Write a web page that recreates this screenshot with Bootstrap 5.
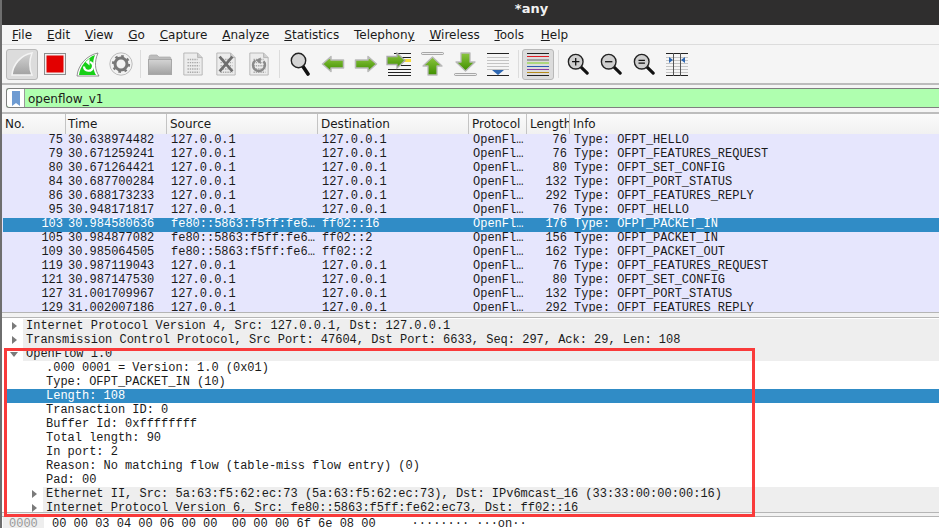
<!DOCTYPE html>
<html lang="en">
<head>
<meta charset="utf-8">
<title>*any</title>
<link rel="stylesheet" href="https://cdn.jsdelivr.net/npm/bootstrap@5.3.0/dist/css/bootstrap.min.css">
<style>
html,body{height:528px;overflow:hidden;background:#f5f5f5}
.wsapp{position:relative;height:528px;overflow:hidden;font-family:"DejaVu Sans",sans-serif;font-size:12px;color:#1a1a1a;border-left:2px solid #6e6e6e}
.titlebar{height:25px;background:#2f2e2e;color:#f2f2f2;font-weight:700;font-size:13px;line-height:13px;padding:2px 0 0 124px;text-align:center;margin-left:-2px;box-sizing:border-box}
.menubar{height:19px;background:#f5f5f5;padding-left:10px;gap:14.8px;line-height:21px;border-bottom:1px solid #dcdcdc;box-sizing:content-box}
.helpitem{margin-left:2px}
.toolbar{height:38px;background:#f5f5f5;border-bottom:2px solid #bcbcbc;padding-left:3.5px;box-sizing:content-box}
.slot{width:33px;height:38px}
.slot svg{display:block}
.pressed{background:#dcdcdc;border:1px solid #b8b8b8;border-radius:3px;width:32px;height:31px}
.sepline{width:1px;height:28px;background:#dcdcdc}
.sepa{width:6px}.sepb{width:8px}.sepc{width:7px}
.filterwrap{height:28px;padding:3px 0 0 4px;background:#f5f5f5}
.filterbox{height:20px;background:#afffaf;border:1px solid #7f7f7f;border-right:0;border-radius:3px 0 0 3px;line-height:20px}
.bookmark{width:18px;background:#fff;border-right:1px solid #9a9a9a;border-radius:3px 0 0 3px}
.filtertext{padding-left:3px}
.coltitle{height:20px;background:linear-gradient(#fbfbfb,#f1f1f1);border-top:2px solid #bdbdbd;line-height:21px;margin-top:-1px;padding-left:1px;box-sizing:content-box}
.coltitle>div{border-right:1px solid #c4c4c4;padding-left:3px;white-space:nowrap;overflow:hidden}
.coltitle>.cno{padding-left:2px}.coltitle>.ctime{padding-left:2px}
.cno{width:63px}.ctime{width:101px}.csrc{width:151px}.cdst{width:151px}.cprot{width:58px}.clen{width:43px}.cinfo{flex:1}
.mono{font-family:"Liberation Mono",monospace;font-size:12px;letter-spacing:-.01px}
.plist{height:179px;overflow:hidden;background:#e4e4fb;padding-left:1px;border-bottom:1px solid #b5b5b5}
.prow{height:14px;line-height:12px;background:#e6e6fd;white-space:nowrap}
.prow>div{padding-left:4px;overflow:hidden}
.prow>.ctime{padding-left:2px}
.prow .cno,.prow .clen{text-align:right;padding-right:3px;padding-left:2px}
.prow.chosen{background:#308cc6;color:#fff}
.splitter{height:5px;background:#f2f2f2;border-bottom:1px solid #b5b5b5}
.dpane{height:195px;overflow:hidden;background:#fff;border-bottom:1px solid #b5b5b5;padding-top:1px}
.drow{height:14px;line-height:14px;white-space:pre;padding-left:3px}
.lvl1{background:#eee;margin-left:21px}
.lvl2{background:#eee;margin-left:41px;padding-left:3px}
.lvlf{padding-left:44px}
.dline{position:relative}
.arrow{position:absolute;top:3px;width:0;height:0;border-top:4px solid transparent;border-bottom:4px solid transparent;border-left:5px solid #7a7a7a}
.arrow.open{top:5px;border-left:4px solid transparent;border-right:4px solid transparent;border-top:5px solid #7a7a7a;border-bottom:0;left:8px}
.a1{left:10px}.a2{left:30px}
.chosen2{background:#308cc6;color:#fff;margin-left:4px;padding-left:40px}
.gapfill{height:4px;background:#f2f2f2;border-bottom:1px solid #b5b5b5}
.hexrow{height:14px;line-height:14px;background:#fff;white-space:pre}
.hexoff{width:41px;background:#eee;color:#999;padding-left:6px;margin-left:1px}
.hexdata{padding-left:8px}
.redbox{position:absolute;left:1.5px;top:348px;width:751px;height:169px;border:3px solid #f93a3a;pointer-events:none}
</style>
</head>
<body>
<svg width="0" height="0" class="d-block" aria-hidden="true">
<defs>
<linearGradient id="gg" x1="0" y1="0" x2="0" y2="1"><stop offset="0" stop-color="#8cc63f"/><stop offset="1" stop-color="#3f8f00"/></linearGradient>
<linearGradient id="fg" x1="0" y1="0" x2="0" y2="1"><stop offset="0" stop-color="#d4d4d4"/><stop offset="1" stop-color="#a2a2a2"/></linearGradient>
<symbol id="lens" viewBox="0 0 24 24"><path d="M14 14 22 22" stroke="#111" stroke-width="3.4" stroke-linecap="round"/><circle cx="9.5" cy="9.5" r="8" fill="#cfcfcf" stroke="#222" stroke-width="1.5"/></symbol>
<symbol id="page" viewBox="0 0 24 26"><path d="M2 1H17L22 6V25H2Z" fill="#ececec" stroke="#b4b4b4"/><path d="M17 1V6H22" fill="#cfcfcf" stroke="#b4b4b4"/><g stroke="#a8a8a8" stroke-width="1.600" stroke-dasharray="1.500 1"><path d="M6 8H17M6 11.500H19M6 15H19M6 18.500H19M6 22H19"/></g></symbol>
<symbol id="arrowl" viewBox="0 0 24 18"><path d="M1.500 9 10 1.500V5H22.500V13H10V16.500Z" fill="url(#gg)" stroke="#b9b9b9" stroke-width="1.500" stroke-linejoin="round"/></symbol>
</defs>
</svg>
<div class="wsapp">
  <div class="titlebar">*any</div>
  <div class="menubar d-flex">
    <span><u>F</u>ile</span><span><u>E</u>dit</span><span><u>V</u>iew</span><span><u>G</u>o</span><span><u>C</u>apture</span><span><u>A</u>nalyze</span><span><u>S</u>tatistics</span><span>Telephon<u>y</u></span><span><u>W</u>ireless</span><span><u>T</u>ools</span><span class="helpitem"><u>H</u>elp</span>
  </div>
  <div class="toolbar d-flex align-items-center">
    <div class="slot d-flex align-items-center justify-content-center"><div class="pressed d-flex align-items-center justify-content-center"><svg width="24" height="26" viewBox="0 0 24 26"><path d="M2 24C3 13 11 4 22 2 19 10 19 17 22 24Z" fill="url(#fg)" stroke="#f4f4f4" stroke-width="1.500"/></svg></div></div>
    <div class="slot d-flex align-items-center justify-content-center"><svg width="22" height="22" viewBox="0 0 22 22"><rect x=".5" y=".5" width="21" height="21" fill="#efefef" stroke="#8d8d8d"/><rect x="2.500" y="2.500" width="17" height="17" fill="#e30000"/></svg></div>
    <div class="slot d-flex align-items-center justify-content-center"><svg width="24" height="25" viewBox="0 0 24 25"><path d="M1 24C2 13 11 3 22 1 18 10 19 18 23 24Z" fill="#fff" stroke="#777" stroke-width=".8"/><path d="M3 23C4 14 11 6 19 3 16 10 17 18 20 23Z" fill="#17d017"/><path d="M8 14.500A4.500 4.500 0 1 0 14 10" fill="none" stroke="#fff" stroke-width="2.200"/><path d="M13.500 6.500V13.500L9.500 10Z" fill="#fff"/></svg></div>
    <div class="slot d-flex align-items-center justify-content-center"><svg width="24" height="24" viewBox="0 0 24 24"><circle cx="12" cy="12" r="11.200" fill="#f2f2f2" stroke="#bdbdbd"/><circle cx="12" cy="12" r="6" fill="none" stroke="#777" stroke-width="3"/><circle cx="12" cy="12" r="8" fill="none" stroke="#777" stroke-width="2.200" stroke-dasharray="2.600 3.680"/></svg></div>
    <div class="sepa d-flex justify-content-center"><div class="sepline"></div></div>
    <div class="slot d-flex align-items-center justify-content-center"><svg width="24" height="21" viewBox="0 0 24 21"><path d="M1 3Q1 1 3 1H9L11 3H22Q23 3 23 5V7H1Z" fill="#bcbcbc" stroke="#aaa" stroke-width=".7"/><rect x=".5" y="5.500" width="23" height="15" fill="url(#fg)" stroke="#a8a8a8"/></svg></div>
    <div class="slot d-flex align-items-center justify-content-center"><svg width="22" height="24" viewBox="0 0 24 26"><use href="#page"/></svg></div>
    <div class="slot d-flex align-items-center justify-content-center"><svg width="22" height="24" viewBox="0 0 24 26"><use href="#page"/><path d="M5 5 19 21M19 5 5 21" stroke="#6e6e6e" stroke-width="3"/></svg></div>
    <div class="slot d-flex align-items-center justify-content-center"><svg width="22" height="24" viewBox="0 0 24 26"><use href="#page"/><path d="M8 9A6.500 6.500 0 1 0 17 10" fill="none" stroke="#8a8a8a" stroke-width="2.600"/><path d="M14 6V13L8 9Z" fill="#8a8a8a"/></svg></div>
    <div class="sepb d-flex justify-content-center"><div class="sepline"></div></div>
    <div class="slot d-flex align-items-center justify-content-center"><svg width="20" height="24" viewBox="0 0 20 24"><path d="M12 13 18 22" stroke="#111" stroke-width="3.600" stroke-linecap="round"/><circle cx="8.500" cy="8.500" r="7.200" fill="#d4d4d4" stroke="#222" stroke-width="1.400"/></svg></div>
    <div class="slot d-flex align-items-center justify-content-center"><svg width="24" height="18" viewBox="0 0 24 18"><use href="#arrowl"/></svg></div>
    <div class="slot d-flex align-items-center justify-content-center"><svg width="24" height="18" viewBox="0 0 24 18"><g transform="translate(24 0) scale(-1 1)"><use href="#arrowl"/></g></svg></div>
    <div class="slot d-flex align-items-center justify-content-center"><svg width="26" height="24" viewBox="0 0 26 24"><g stroke="#222"><path d="M8 1.500H25M15 5.500H25M15 13.500H25M2 17.500H25M2 20.500H25M2 23.500H25" stroke-width="1"/></g><rect x="18" y="7" width="7" height="3" fill="#f5dc3c"/><path d="M19 8.500 11 1V4.500H1V12.500H11V16Z" fill="url(#gg)" stroke="#aaa" stroke-width="1.300"/></svg></div>
    <div class="slot d-flex align-items-center justify-content-center"><svg width="23" height="24" viewBox="0 0 23 24"><rect x=".5" y=".5" width="22" height="2" rx="1" fill="#eee" stroke="#888" stroke-width=".7"/><path d="M11.500 5 21 14H16V23H7V14H2Z" fill="url(#gg)" stroke="#b9b9b9" stroke-width="1.300" stroke-linejoin="round"/></svg></div>
    <div class="slot d-flex align-items-center justify-content-center"><svg width="23" height="24" viewBox="0 0 23 24"><path d="M11.500 19 21 10H16V1H7V10H2Z" fill="url(#gg)" stroke="#b9b9b9" stroke-width="1.300" stroke-linejoin="round"/><rect x=".5" y="21.500" width="22" height="2" rx="1" fill="#eee" stroke="#888" stroke-width=".7"/></svg></div>
    <div class="slot d-flex align-items-center justify-content-center"><svg width="22" height="23" viewBox="0 0 22 23"><g stroke="#c4c4c4"><path d="M0 4.500H22M0 7.500H22M0 10.500H22M0 13.500H22M0 16.500H22"/></g><path d="M0 .5H22M0 22.500H22" stroke="#222"/><path d="M5 17H17L11 22Z" fill="#2e67b1"/></svg></div>
    <div class="sepc d-flex justify-content-center"><div class="sepline"></div></div>
    <div class="slot d-flex align-items-center justify-content-center"><div class="pressed d-flex align-items-center justify-content-center"><svg width="22" height="23" viewBox="0 0 22 23"><path d="M0 .5H22" stroke="#222"/><path d="M0 3.500H22" stroke="#e01b24"/><path d="M0 7H22" stroke="#444" stroke-width=".8"/><path d="M0 10H22" stroke="#7ed321"/><path d="M0 13.500H22" stroke="#2a5db0"/><path d="M0 16.500H22" stroke="#8a3fa0"/><path d="M0 19.500H22" stroke="#b58a1a"/><path d="M0 22.500H22" stroke="#222"/></svg></div></div>
    <div class="sepc d-flex justify-content-center"><div class="sepline"></div></div>
    <div class="slot d-flex align-items-center justify-content-center"><svg width="22" height="22" viewBox="0 0 24 24"><use href="#lens"/><path d="M5.500 9.500H13.500M9.500 5.500V13.500" stroke="#111" stroke-width="1.400"/></svg></div>
    <div class="slot d-flex align-items-center justify-content-center"><svg width="22" height="22" viewBox="0 0 24 24"><use href="#lens"/><path d="M5.500 9.500H13.500" stroke="#111" stroke-width="1.400"/></svg></div>
    <div class="slot d-flex align-items-center justify-content-center"><svg width="22" height="22" viewBox="0 0 24 24"><use href="#lens"/><path d="M6 8H13M6 11H13" stroke="#111" stroke-width="1.400"/></svg></div>
    <div class="slot d-flex align-items-center justify-content-center"><svg width="22" height="23" viewBox="0 0 22 23"><g stroke="#c4c4c4"><path d="M0 4.500H22M0 7.500H22M0 10.500H22M0 13.500H22M0 16.500H22M0 19.500H22"/></g><path d="M0 .5H22M0 22.500H22" stroke="#222"/><path d="M7.500 0V23M14.500 0V23" stroke="#555"/><path d="M3 4 7 7 3 10ZM19 4 15 7 19 10Z" fill="#2e67b1"/></svg></div>
  </div>
  <div class="filterwrap">
    <div class="filterbox d-flex">
      <div class="bookmark d-flex align-items-center justify-content-center"><svg width="8" height="15" viewBox="0 0 8 15"><path d="M0 0H8V15L4 12 0 15Z" fill="#6e9bd2"/></svg></div>
      <div class="filtertext">openflow_v1</div>
    </div>
  </div>
  <div class="coltitle d-flex">
    <div class="cno">No.</div><div class="ctime">Time</div><div class="csrc">Source</div><div class="cdst">Destination</div><div class="cprot">Protocol</div><div class="clen">Length</div><div class="cinfo border-0">Info</div>
  </div>
  <div class="plist mono">
    <div class="prow d-flex"><div class="cno">75</div><div class="ctime">30.638974482</div><div class="csrc">127.0.0.1</div><div class="cdst">127.0.0.1</div><div class="cprot">OpenFl…</div><div class="clen">76</div><div class="cinfo">Type: OFPT_HELLO</div></div>
    <div class="prow d-flex"><div class="cno">79</div><div class="ctime">30.671259241</div><div class="csrc">127.0.0.1</div><div class="cdst">127.0.0.1</div><div class="cprot">OpenFl…</div><div class="clen">76</div><div class="cinfo">Type: OFPT_FEATURES_REQUEST</div></div>
    <div class="prow d-flex"><div class="cno">80</div><div class="ctime">30.671264421</div><div class="csrc">127.0.0.1</div><div class="cdst">127.0.0.1</div><div class="cprot">OpenFl…</div><div class="clen">80</div><div class="cinfo">Type: OFPT_SET_CONFIG</div></div>
    <div class="prow d-flex"><div class="cno">84</div><div class="ctime">30.687700284</div><div class="csrc">127.0.0.1</div><div class="cdst">127.0.0.1</div><div class="cprot">OpenFl…</div><div class="clen">132</div><div class="cinfo">Type: OFPT_PORT_STATUS</div></div>
    <div class="prow d-flex"><div class="cno">86</div><div class="ctime">30.688173233</div><div class="csrc">127.0.0.1</div><div class="cdst">127.0.0.1</div><div class="cprot">OpenFl…</div><div class="clen">292</div><div class="cinfo">Type: OFPT_FEATURES_REPLY</div></div>
    <div class="prow d-flex"><div class="cno">95</div><div class="ctime">30.948171817</div><div class="csrc">127.0.0.1</div><div class="cdst">127.0.0.1</div><div class="cprot">OpenFl…</div><div class="clen">76</div><div class="cinfo">Type: OFPT_HELLO</div></div>
    <div class="prow chosen d-flex"><div class="cno">103</div><div class="ctime">30.984580636</div><div class="csrc">fe80::5863:f5ff:fe6…</div><div class="cdst">ff02::16</div><div class="cprot">OpenFl…</div><div class="clen">176</div><div class="cinfo">Type: OFPT_PACKET_IN</div></div>
    <div class="prow d-flex"><div class="cno">105</div><div class="ctime">30.984877082</div><div class="csrc">fe80::5863:f5ff:fe6…</div><div class="cdst">ff02::2</div><div class="cprot">OpenFl…</div><div class="clen">156</div><div class="cinfo">Type: OFPT_PACKET_IN</div></div>
    <div class="prow d-flex"><div class="cno">109</div><div class="ctime">30.985064505</div><div class="csrc">fe80::5863:f5ff:fe6…</div><div class="cdst">ff02::2</div><div class="cprot">OpenFl…</div><div class="clen">162</div><div class="cinfo">Type: OFPT_PACKET_OUT</div></div>
    <div class="prow d-flex"><div class="cno">119</div><div class="ctime">30.987119043</div><div class="csrc">127.0.0.1</div><div class="cdst">127.0.0.1</div><div class="cprot">OpenFl…</div><div class="clen">76</div><div class="cinfo">Type: OFPT_FEATURES_REQUEST</div></div>
    <div class="prow d-flex"><div class="cno">121</div><div class="ctime">30.987147530</div><div class="csrc">127.0.0.1</div><div class="cdst">127.0.0.1</div><div class="cprot">OpenFl…</div><div class="clen">80</div><div class="cinfo">Type: OFPT_SET_CONFIG</div></div>
    <div class="prow d-flex"><div class="cno">127</div><div class="ctime">31.001709967</div><div class="csrc">127.0.0.1</div><div class="cdst">127.0.0.1</div><div class="cprot">OpenFl…</div><div class="clen">132</div><div class="cinfo">Type: OFPT_PORT_STATUS</div></div>
    <div class="prow d-flex"><div class="cno">129</div><div class="ctime">31.002007186</div><div class="csrc">127.0.0.1</div><div class="cdst">127.0.0.1</div><div class="cprot">OpenFl…</div><div class="clen">292</div><div class="cinfo">Type: OFPT_FEATURES_REPLY</div></div>
  </div>
  <div class="splitter"></div>
  <div class="dpane mono">
    <div class="dline"><span class="arrow a1"></span><div class="drow lvl1">Internet Protocol Version 4, Src: 127.0.0.1, Dst: 127.0.0.1</div></div>
    <div class="dline"><span class="arrow a1"></span><div class="drow lvl1">Transmission Control Protocol, Src Port: 47604, Dst Port: 6633, Seq: 297, Ack: 29, Len: 108</div></div>
    <div class="dline"><span class="arrow open"></span><div class="drow lvl1">OpenFlow 1.0</div></div>
    <div class="drow lvlf">.000 0001 = Version: 1.0 (0x01)</div>
    <div class="drow lvlf">Type: OFPT_PACKET_IN (10)</div>
    <div class="drow chosen2">Length: 108</div>
    <div class="drow lvlf">Transaction ID: 0</div>
    <div class="drow lvlf">Buffer Id: 0xffffffff</div>
    <div class="drow lvlf">Total length: 90</div>
    <div class="drow lvlf">In port: 2</div>
    <div class="drow lvlf">Reason: No matching flow (table-miss flow entry) (0)</div>
    <div class="drow lvlf">Pad: 00</div>
    <div class="dline"><span class="arrow a2"></span><div class="drow lvl2">Ethernet II, Src: 5a:63:f5:62:ec:73 (5a:63:f5:62:ec:73), Dst: IPv6mcast_16 (33:33:00:00:00:16)</div></div>
    <div class="dline"><span class="arrow a2"></span><div class="drow lvl2">Internet Protocol Version 6, Src: fe80::5863:f5ff:fe62:ec73, Dst: ff02::16</div></div>
  </div>
  <div class="gapfill"></div>
  <div class="hexrow mono d-flex"><div class="hexoff">0000</div><div class="hexdata">00 00 03 04 00 06 00 00  00 00 00 6f 6e 08 00     ········ ···on··</div></div>
  <div class="redbox"></div>
</div>
</body>
</html>
